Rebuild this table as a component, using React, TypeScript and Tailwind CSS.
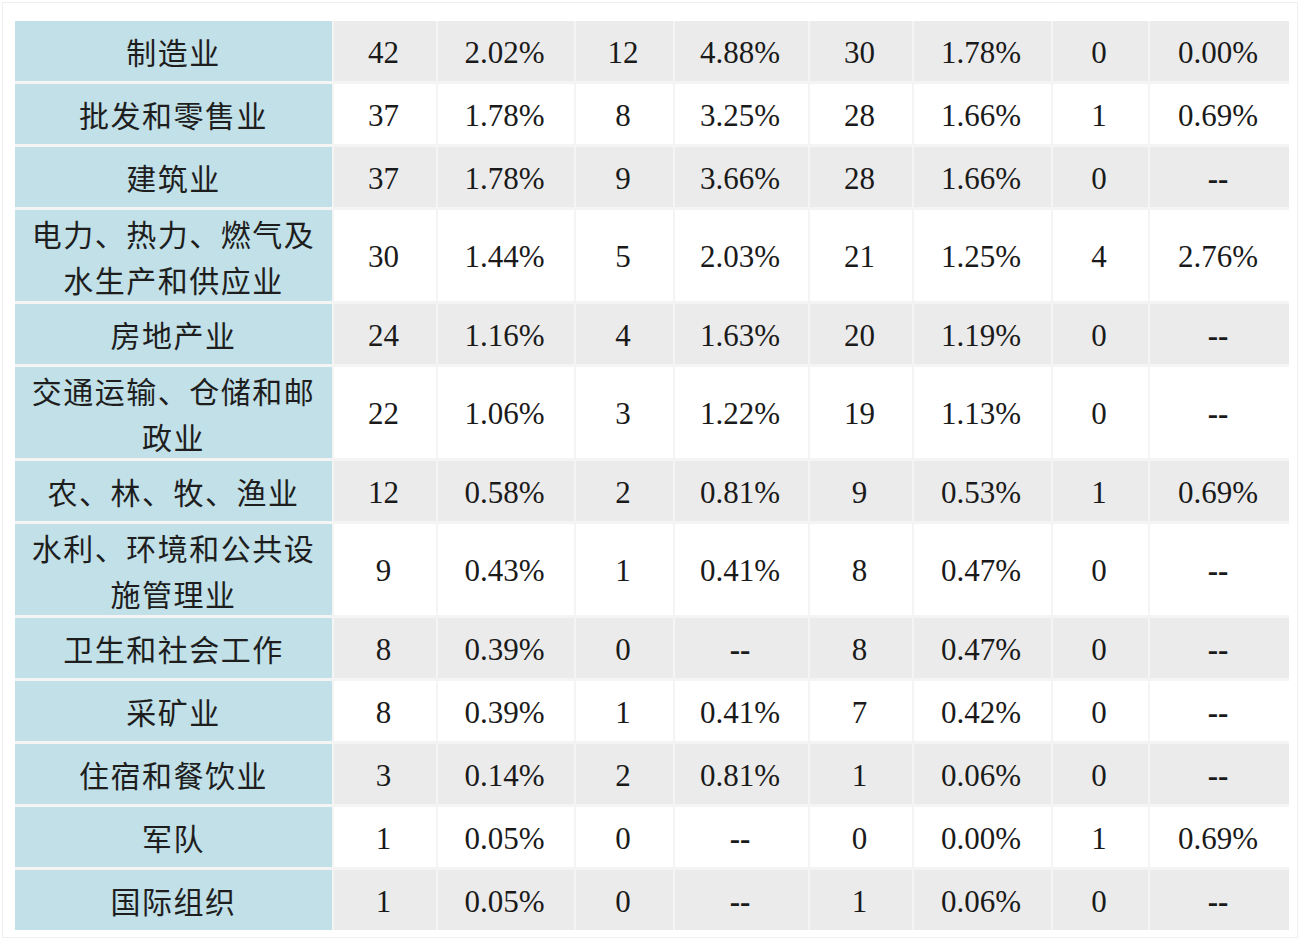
type Row = {
  name: string[];
  cells: string[];
};

const rows: Row[] = [
  { name: ["制造业"], cells: ["42", "2.02%", "12", "4.88%", "30", "1.78%", "0", "0.00%"] },
  { name: ["批发和零售业"], cells: ["37", "1.78%", "8", "3.25%", "28", "1.66%", "1", "0.69%"] },
  { name: ["建筑业"], cells: ["37", "1.78%", "9", "3.66%", "28", "1.66%", "0", "--"] },
  {
    name: ["电力、热力、燃气及", "水生产和供应业"],
    cells: ["30", "1.44%", "5", "2.03%", "21", "1.25%", "4", "2.76%"],
  },
  { name: ["房地产业"], cells: ["24", "1.16%", "4", "1.63%", "20", "1.19%", "0", "--"] },
  {
    name: ["交通运输、仓储和邮", "政业"],
    cells: ["22", "1.06%", "3", "1.22%", "19", "1.13%", "0", "--"],
  },
  { name: ["农、林、牧、渔业"], cells: ["12", "0.58%", "2", "0.81%", "9", "0.53%", "1", "0.69%"] },
  {
    name: ["水利、环境和公共设", "施管理业"],
    cells: ["9", "0.43%", "1", "0.41%", "8", "0.47%", "0", "--"],
  },
  { name: ["卫生和社会工作"], cells: ["8", "0.39%", "0", "--", "8", "0.47%", "0", "--"] },
  { name: ["采矿业"], cells: ["8", "0.39%", "1", "0.41%", "7", "0.42%", "0", "--"] },
  { name: ["住宿和餐饮业"], cells: ["3", "0.14%", "2", "0.81%", "1", "0.06%", "0", "--"] },
  { name: ["军队"], cells: ["1", "0.05%", "0", "--", "0", "0.00%", "1", "0.69%"] },
  { name: ["国际组织"], cells: ["1", "0.05%", "0", "--", "1", "0.06%", "0", "--"] },
];

const cjkFont = {
  fontFamily: '"Noto Sans CJK SC", "Liberation Serif", serif',
};

export default function App() {
  return (
    <div className="h-[950px] w-[1304px] bg-white p-[2px]">
      <div className="h-[936px] w-[1296px] border border-[#efefef] pl-[12px] pt-[18px]">
        <div
          className="grid w-[1274px] grid-cols-[317px_102px_136px_97px_133px_102px_137px_95px_139px] gap-x-[2px] gap-y-[3px] bg-[#f4f4f4]"
          style={{ fontFamily: '"Liberation Serif", serif' }}
        >
          {rows.map((row, i) => {
            const tall = row.name.length > 1;
            const rowBg = i % 2 === 0 ? "bg-[#ebebeb]" : "bg-white";
            const h = tall ? "h-[91px]" : "h-[60px]";
            return [
              <div
                key={`n${i}`}
                className={`${h} flex flex-col items-center justify-center bg-[#c1e0e7] text-[30px] leading-[46px] tracking-[1.5px] text-[#1e1e1e]`}
                style={cjkFont}
              >
                {row.name.map((line) => (
                  <span key={line}>{line}</span>
                ))}
              </div>,
              ...row.cells.map((c, j) => (
                <div
                  key={`c${i}-${j}`}
                  className={`${h} ${rowBg} flex items-center justify-center pr-[3px] pt-[4px] text-[31px] text-[#1a1a1a]`}
                >
                  {c === "--" ? <span className="font-bold">--</span> : c}
                </div>
              )),
            ];
          })}
        </div>
      </div>
    </div>
  );
}
